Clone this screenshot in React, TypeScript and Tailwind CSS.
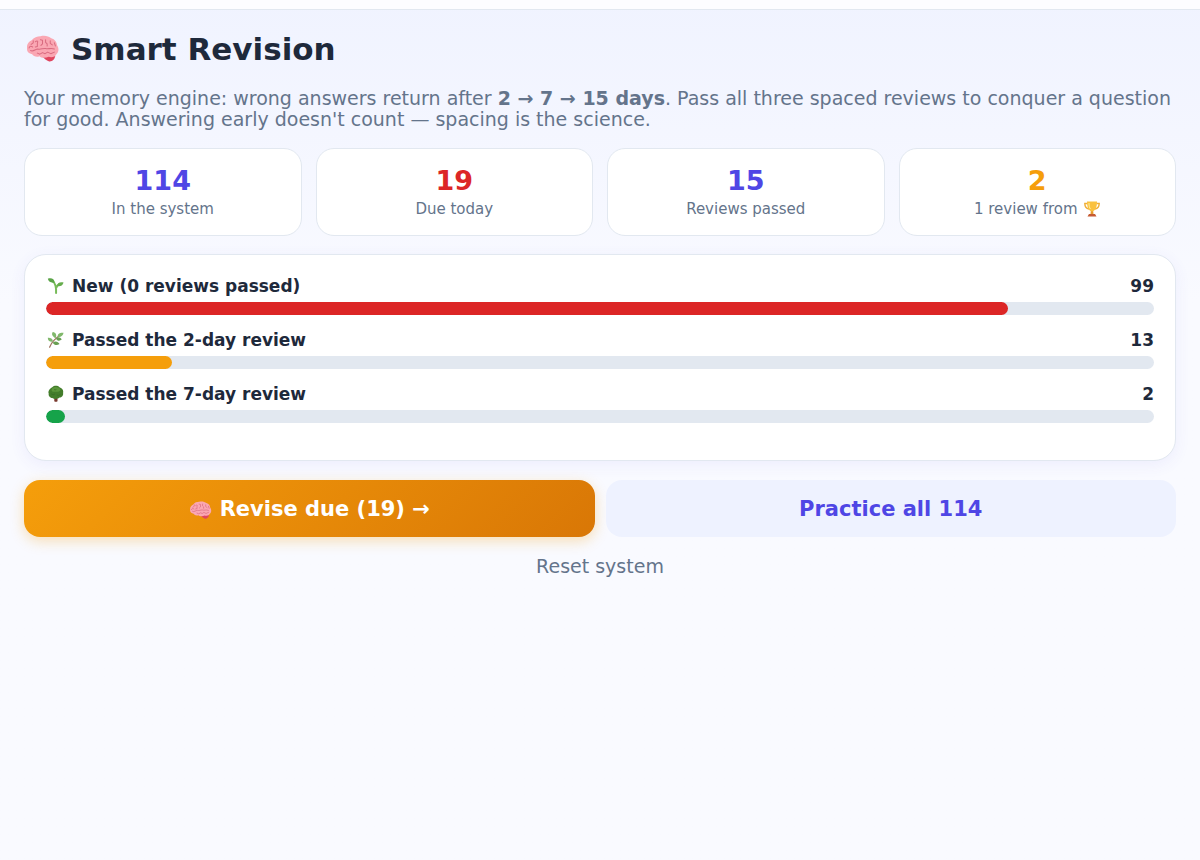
const stats = [
  { value: '114', label: 'In the system', color: 'text-[#4f46e5]' },
  { value: '19', label: 'Due today', color: 'text-[#dc2626]' },
  { value: '15', label: 'Reviews passed', color: 'text-[#4f46e5]' },
  { value: '2', label: '1 review from', color: 'text-[#f59e0b]', trophy: true },
];

const stages = [
  { Icon: Sprout, label: 'New (0 reviews passed)', count: 99, color: 'bg-[#dc2626]' },
  { Icon: Herb, label: 'Passed the 2-day review', count: 13, color: 'bg-[#f59e0b]' },
  { Icon: Tree, label: 'Passed the 7-day review', count: 2, color: 'bg-[#16a34a]' },
];

const total = 114;

function Brain({ className }: { className: string }) {
  return (
    <svg viewBox="0 0 32 26" className={className} aria-hidden="true">
      <path d="M15 20 C18 18 27 18 28 20.5 C28.5 23 25 26 22.5 25.5 C19.5 24.5 17.5 22.5 15 20Z" fill="#e0455f" />
      <path d="M13 20.5 C10 22 7 20 6 18.5 C2.5 18 .5 15.5 1 12.5 C.5 9 3 6 5.5 5 C7.5 2 11 1 14 1 C18 0 22 .8 24.5 3 C28 4 30 7 30 9.5 C32.5 13 31.5 17 29.5 18.5 C28.5 21 25 22 22 21 C19 22.5 15 22.5 13 20.5Z" fill="#faa7b3" />
      <g fill="none" stroke="#d96b80" strokeWidth="1" strokeLinecap="round" strokeLinejoin="round">
        <path d="M7 5.5 V7.5 L5 9 M3 12.5 C3.5 10.5 5 10.5 6.5 11.5" />
        <path d="M9 6.5 C11 5 12 6 11 8 V11 L9 11.5" />
        <path d="M14 4.5 L16 5 V8.5 L14.5 10" />
        <path d="M19 4.5 V7 L20.5 8.5 V10.5 M23.5 5.5 V8 L25.5 9.5" />
        <path d="M4.5 15 C7 16.5 9 13.5 11.5 13.5 C14 14.5 16.5 12.5 19 13 C21.5 14 24 12 27.5 13.5" />
        <path d="M11 17.5 L13.5 18.5 L16 17 L18.5 18 L21 16.5 L24 18 L27.5 16.5" />
        <path d="M27.5 7.5 L28.5 10.5" />
      </g>
    </svg>
  );
}

function Sprout() {
  return (
    <svg viewBox="-2 -1 20 20" className="size-[18px]" aria-hidden="true">
      <path d="M9.2 16.8 C9.5 11 9 6.5 5.5 3.5 M9.5 11 C10 9 11.5 7.5 13 7" fill="none" stroke="#77bb58" strokeWidth="2.2" strokeLinecap="round" />
      <path d="M0 1 C4 -.5 7.5 1.5 7.5 5 C4 6 1 4.5 0 1Z" fill="#5aa447" />
      <path d="M10.5 9 C10 5.5 13.5 4 17.5 5 C16.5 8.5 13.5 10 10.5 9Z" fill="#66ad4d" />
    </svg>
  );
}

function Herb() {
  return (
    <svg viewBox="-2 -1 20 20" className="size-[18px]" aria-hidden="true">
      <path d="M2 17 C4 12 7 8 14 3.5" fill="none" stroke="#a07562" strokeWidth="1.4" strokeLinecap="round" />
      <g fill="#80b86b">
        <path d="M11 5.5 C10.5 2 14 .5 17.5 1 C17 4.5 14.5 6 11 5.5Z" />
        <path d="M8.5 7 C4.5 4.5 4 2 5.5 0 C9 .5 10.5 3.5 8.5 7Z" />
        <path d="M5.5 11 C2 11.5 0 9.5 0 6.5 C3.5 6.5 6 8 5.5 11Z" />
      </g>
      <g fill="#689f52">
        <path d="M9 7.5 C11 5 14 6 15.5 8.5 C13 10.5 10.5 10 9 7.5Z" />
        <path d="M5.5 12 C8 9.5 11.5 10.5 13 13.5 C10 15.5 7 14.5 5.5 12Z" />
      </g>
    </svg>
  );
}

function Tree() {
  return (
    <svg viewBox="-2 -1 20 20" className="size-[18px]" aria-hidden="true">
      <path d="M7.2 12 H10.8 V17 Q9 18.2 7.2 17Z" fill="#78382d" />
      <path d="M5 1.5 C7 -.7 11 -.7 13 1.5 C16 2.5 17.8 5 17 8 C17.5 11 15.5 13 13 13 C11 15 7 15 5 13.5 C2.5 13.5 .5 11 1 8.5 C0 6 2 3 5 1.5Z" fill="#437d2b" />
      <path d="M5 2.5 C8 .5 12 1 14 4 C14.5 6 11 7 8 6.5 C5 7 3 5 5 2.5Z" fill="#5b963b" />
      <path d="M4 9 Q6 10.5 8 9 M10 10 Q12 11.5 14 9.5 M7 4 Q8 5 9.5 4" fill="none" stroke="#366b24" strokeWidth=".8" />
    </svg>
  );
}

function Trophy() {
  return (
    <svg viewBox="0 0 18 18" className="size-[18px]" aria-hidden="true">
      <path d="M4.5 3.5 H1.8 C1.8 7 3.5 8.5 6 9 M13.5 3.5 H16.2 C16.2 7 14.5 8.5 12 9" fill="none" stroke="#f0ae36" strokeWidth="1.4" />
      <path d="M8 9 H10 L10.5 14 H7.5Z" fill="#e69b2e" />
      <path d="M4 1.5 H14 C14 6.5 13 10.5 9 11.5 C5 10.5 4 6.5 4 1.5Z" fill="#fac13e" />
      <path d="M6 3 C6 6 6.5 8 7.5 9" fill="none" stroke="#fff0a0" strokeWidth="1" />
      <path d="M6 14 H12 L13.5 16.5 H4.5Z" fill="#c65b32" />
    </svg>
  );
}

export default function App() {
  return (
    <div className="min-h-screen bg-linear-to-b from-[#f0f3ff] to-[#f9faff] to-35% font-['DejaVu_Sans',sans-serif] text-[#1e293b]">
      <header className="h-[10px] border-b border-[#e2e8f0] bg-[#fdfdff]" />
      <main className="px-6 pt-[19px]">
        <h1 className="flex items-center gap-3 pl-[2px] text-[31px] leading-10 font-bold">
          <Brain className="mb-[2px] h-[27px] w-[33px]" />
          Smart Revision
        </h1>
        <p className="mt-[19px] text-[19px] leading-[21px] text-[#64748b]">
          Your memory engine: wrong answers return after <b>2 → 7 → 15 days</b>. Pass all three spaced
          reviews to conquer a question for good. Answering early doesn't count — spacing is the science.
        </p>

        <div className="mt-[18px] grid grid-cols-4 gap-[14px]">
          {stats.map(s => (
            <div key={s.label} className="rounded-[18px] border border-[#e2e8f0] bg-white px-3 py-4 text-center">
              <div className={`text-[27px] leading-8 font-bold ${s.color}`}>{s.value}</div>
              <div className="mt-[3px] flex items-center justify-center gap-[5px] pb-px text-[15px] leading-[18px] text-[#64748b]">
                {s.label}
                {s.trophy && <Trophy />}
              </div>
            </div>
          ))}
        </div>

        {/* Progress by stage */}
        <section className="mt-[18px] rounded-[22px] border border-[#e2e8f0] bg-white px-[21px] pt-[21px] pb-[22px] shadow-[0_4px_16px_rgba(79,70,229,0.07)]">
          {stages.map(({ Icon, label, count, color }) => (
            <div key={label} className="mb-[15px]">
              <div className="flex items-center text-[17px] leading-5 font-bold">
                <Icon />
                <span className="ml-2">{label}</span>
                <span className="ml-auto">{count}</span>
              </div>
              <div className="mt-[6px] h-[13px] overflow-hidden rounded-full bg-[#e2e8f0]">
                <div className={`h-full rounded-full ${color}`} style={{ width: `${(count / total) * 100}%` }} />
              </div>
            </div>
          ))}
        </section>

        <div className="mt-[19px] grid grid-cols-2 gap-[11px] text-[21px] leading-[25px] font-bold">
          <button className="flex items-center justify-center gap-2 rounded-[16px] bg-linear-135 from-[#f59e0b] to-[#d97706] pt-[17px] pb-[15px] text-white shadow-[0_4px_14px_rgba(245,158,11,0.3)]">
            <Brain className="h-[18px] w-[23px]" />
            Revise due (19) →
          </button>
          <button className="rounded-[16px] bg-[#eef2ff] pt-[17px] pb-[15px] text-[#4f46e5]">Practice all 114</button>
        </div>
        <button className="mt-[15px] w-full text-[19px] leading-7 text-[#64748b]">Reset system</button>
      </main>
    </div>
  );
}
